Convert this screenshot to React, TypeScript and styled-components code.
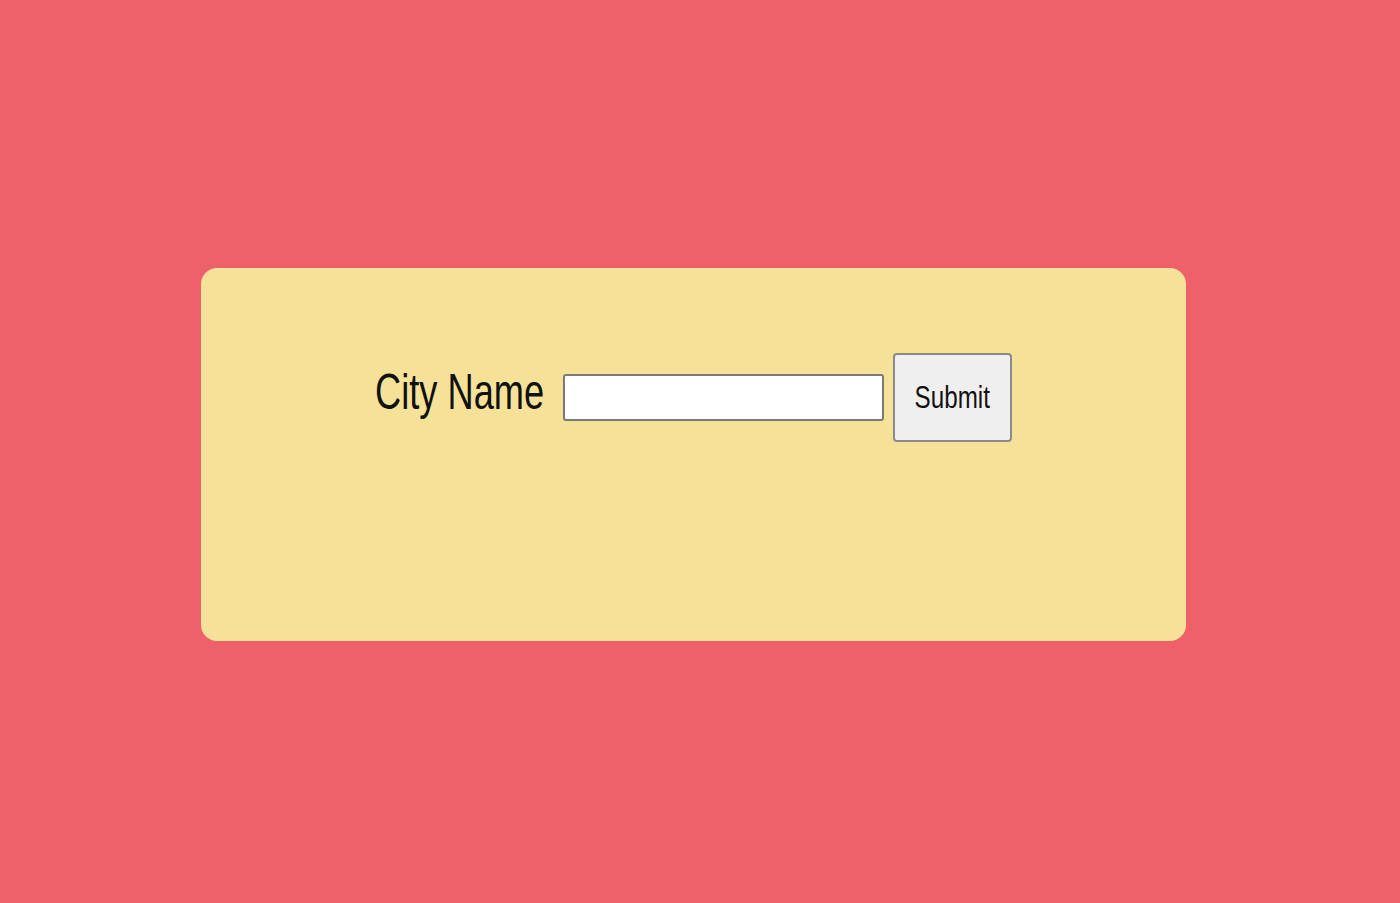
import * as React from "react";
import styled, { createGlobalStyle } from "styled-components";

const GlobalStyle = createGlobalStyle`
    html, body {
        margin: 0;
        padding: 0;
        background-color: #ef616a;
        font-family: "Liberation Sans", Arial, sans-serif;
    }
`;

const Page = styled.div`
    width: 1400px;
    height: 903px;
    box-sizing: border-box;
    padding: 268px 0 0 201px;
    background-color: #ef616a;
`;

const Card = styled.div`
    width: 985px;
    height: 373px;
    box-sizing: border-box;
    background-color: #f5e298;
    border-radius: 16px;
    padding-top: 85px;
    display: flex;
    justify-content: center;
    align-items: flex-start;
`;

const Form = styled.form`
    display: flex;
    align-items: center;
`;

const Label = styled.label`
    display: inline-block;
    width: 169px;
    margin-right: 19px;
    white-space: nowrap;
    font-size: 50px;
    line-height: 1;
    color: #111;
    transform: scaleX(0.725);
    transform-origin: left center;
    margin-top: -12px;
`;

const CityInput = styled.input`
    width: 321px;
    height: 47px;
    box-sizing: border-box;
    border: 2px solid #7a7a7a;
    border-radius: 3px;
    background: #fff;
    margin: 0 9px 0 0;
    padding: 0 6px;
    outline: none;
`;

const SubmitButton = styled.button`
    width: 119px;
    height: 89px;
    box-sizing: border-box;
    border: 2px solid #8a8a8a;
    border-radius: 4px;
    background-color: #efefef;
    color: #111;
    padding: 0;
    font-family: "Liberation Sans", Arial, sans-serif;
    cursor: pointer;
`;

const ButtonText = styled.span`
    display: inline-block;
    font-size: 31px;
    transform: scaleX(0.78);
`;

export default function App() {
    const [city, setCity] = React.useState("");

    return (
        <Page>
            <GlobalStyle />
            <Card>
                <Form onSubmit={e => e.preventDefault()}>
                    <Label htmlFor="city">City Name</Label>
                    <CityInput
                        id="city"
                        type="text"
                        value={city}
                        onChange={e => setCity(e.target.value)}
                    />
                    <SubmitButton type="submit">
                        <ButtonText>Submit</ButtonText>
                    </SubmitButton>
                </Form>
            </Card>
        </Page>
    );
}
